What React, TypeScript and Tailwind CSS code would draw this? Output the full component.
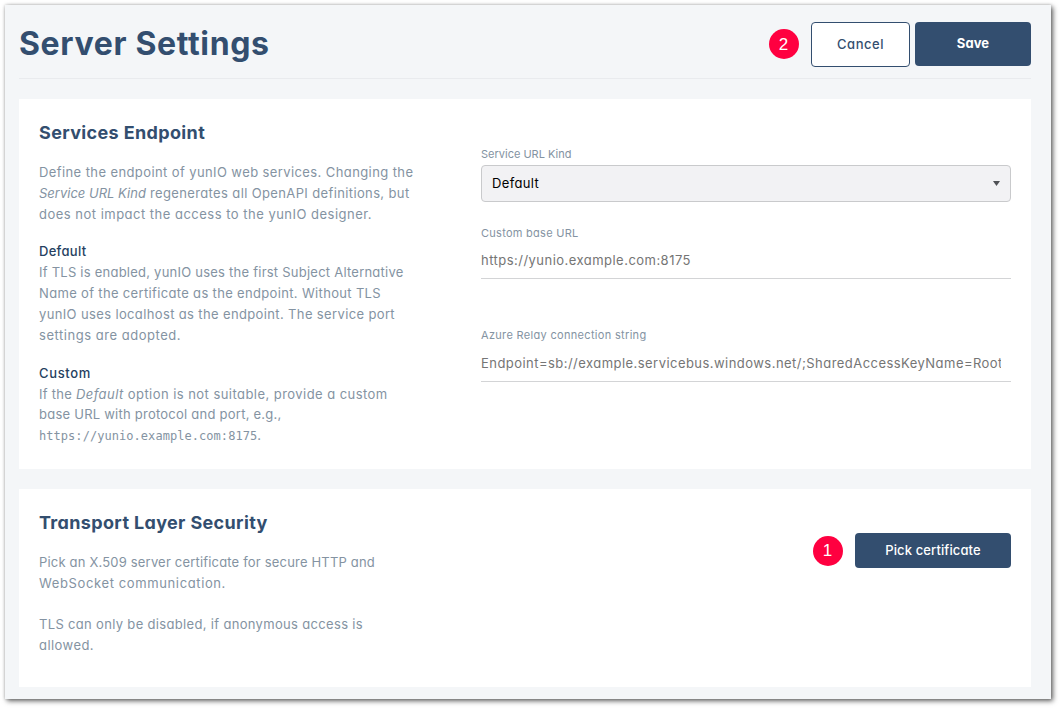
import React from "react";

function Badge({ children }: { children: React.ReactNode }) {
  return (
    <span className="flex size-[30px] shrink-0 items-center justify-center rounded-full bg-[#ff0040] font-['Liberation_Sans',sans-serif] text-[17px] leading-none text-white">
      {children}
    </span>
  );
}

function Line({ className = "", children }: { className?: string; children: React.ReactNode }) {
  return <span className={`block whitespace-pre ${className}`}>{children}</span>;
}

function Header() {
  return (
    <header className="flex h-[74px] items-start border-b border-[#e9ebee] pt-[17px]">
      <h1 className="text-[32px] leading-[44px] font-bold tracking-[0.65px] text-[#334e6f]">Server Settings</h1>
      <div className="ml-auto flex items-start">
        <div className="mt-[7px] mr-[12.5px]">
          <Badge>2</Badge>
        </div>
        <button className="mr-[5px] h-[45px] w-[99px] rounded-[4px] border border-[#334e6f] bg-white text-[13px] font-medium tracking-[0.53px] text-[#334e6f]">
          Cancel
        </button>
        <button className="h-[44px] w-[116px] rounded-[4px] bg-[#334e6f] text-[13px] font-bold tracking-[0.1px] text-white">
          Save
        </button>
      </div>
    </header>
  );
}

function ServicesEndpoint() {
  return (
    <section className="mt-5 flex h-[370px] bg-white px-5">
      <div className="w-[442px] shrink-0 pt-[20px]">
        <h2 className="text-[18px] leading-[27px] font-bold tracking-[0.36px] text-[#334e6f]">Services Endpoint</h2>
        <div className="mt-[16px] text-[13px] leading-[20.8px] text-[#8493a2]">
          <p>
            <Line className="tracking-[0.4px]">Define the endpoint of yunIO web services. Changing the</Line>
            <Line className="tracking-[0.37px]">
              <em className="tracking-[0.01px]">Service URL Kind</em>
              {" regenerates all OpenAPI definitions, but"}
            </Line>
            <Line className="tracking-[0.49px]">does not impact the access to the yunIO designer.</Line>
          </p>
          <p className="mt-[17px]">
            <Line className="font-medium tracking-[0.3px] text-[#263f61]">Default</Line>
            <Line className="tracking-[0.235px]">If TLS is enabled, yunIO uses the first Subject Alternative</Line>
            <Line className="tracking-[0.336px]">Name of the certificate as the endpoint. Without TLS</Line>
            <Line className="tracking-[0.364px]">yunIO uses localhost as the endpoint. The service port</Line>
            <Line className="tracking-[0.528px]">settings are adopted.</Line>
          </p>
          <p className="mt-[17.4px]">
            <Line className="font-medium tracking-[0.65px] text-[#263f61]">Custom</Line>
            <Line className="tracking-[0.45px]">
              <span className="tracking-[0.25px]">If the </span>
              <em>Default</em>
              {" option is not suitable, provide a custom"}
            </Line>
            <Line className="tracking-[0.24px]">base URL with protocol and port, e.g.,</Line>
            <Line>
              <code className="font-['DejaVu_Sans_Mono',monospace] text-[12px] tracking-[0.05px]">https://yunio.example.com:8175</code>.
            </Line>
          </p>
        </div>
      </div>
      <form className="min-w-0 flex-1 pt-[47px] text-[#8493a2]">
        <label className="block text-[11px] leading-[16px]">Service URL Kind</label>
        <div className="mt-[3px] flex h-[37px] items-center justify-between rounded-[4px] border border-[#c9cacc] bg-[#f2f2f4] pr-[10px] pl-[10px] text-[13px] tracking-[0.34px] text-black">
          <span>Default</span>
          <svg className="h-[5px] w-[7px]" viewBox="0 0 7 5">
            <path d="M0 0H7L3.5 5Z" fill="#505256" />
          </svg>
        </div>
        <label className="mt-[23px] block text-[11px] leading-[16px] tracking-[0.27px]">Custom base URL</label>
        <div className="flex h-[38px] items-center border-b border-[#d3d4d6] pt-[2px] text-[13px] tracking-[0.47px] text-[#757575]">
          <span>https://yunio.example.com:8175</span>
        </div>
        <label className="mt-[48px] block text-[11px] leading-[16px] tracking-[0.317px]">Azure Relay connection string</label>
        <div className="flex h-[39px] items-center border-b border-[#d3d4d6] pt-[3px] text-[13px] tracking-[0.456px] text-[#757575]">
          <span className="w-[520px] overflow-hidden whitespace-nowrap">
            Endpoint=sb://example.servicebus.windows.net/;SharedAccessKeyName=Root
          </span>
        </div>
      </form>
    </section>
  );
}

function TransportLayerSecurity() {
  return (
    <section className="mt-5 flex h-[198px] bg-white px-5">
      <div className="pt-[20px]">
        <h2 className="text-[18px] leading-[27px] font-bold tracking-[0.35px] text-[#334e6f]">Transport Layer Security</h2>
        <div className="mt-[16px] text-[13px] leading-[20.8px] text-[#8493a2]">
          <p>
            <Line className="tracking-[0.184px]">Pick an X.509 server certificate for secure HTTP and</Line>
            <Line className="tracking-[0.62px]">WebSocket communication.</Line>
          </p>
          <p className="mt-[20.8px]">
            <Line className="tracking-[0.327px]">TLS can only be disabled, if anonymous access is</Line>
            <Line className="tracking-[0.436px]">allowed.</Line>
          </p>
        </div>
      </div>
      <div className="ml-auto flex items-start pt-[44px]">
        <div className="mt-[2.5px] mr-[12.5px]">
          <Badge>1</Badge>
        </div>
        <button className="h-[35px] w-[156px] rounded-[4px] bg-[#334e6f] text-[13px] font-medium tracking-[0.11px] text-white">
          Pick certificate
        </button>
      </div>
    </section>
  );
}

export default function App() {
  return (
    <div className="h-[708px] w-[1060px] overflow-hidden bg-white pt-[5px] pl-[5px] font-['Inter','Open_Sans',sans-serif] [font-feature-settings:'cv11']">
      <main className="h-[694px] w-[1046px] bg-[#f4f6f8] pr-[20px] pl-[14px] shadow-[0_0_3px_rgba(0,0,0,0.2),2px_2px_5px_rgba(0,0,0,0.6)]">
        <Header />
        <ServicesEndpoint />
        <TransportLayerSecurity />
      </main>
    </div>
  );
}
